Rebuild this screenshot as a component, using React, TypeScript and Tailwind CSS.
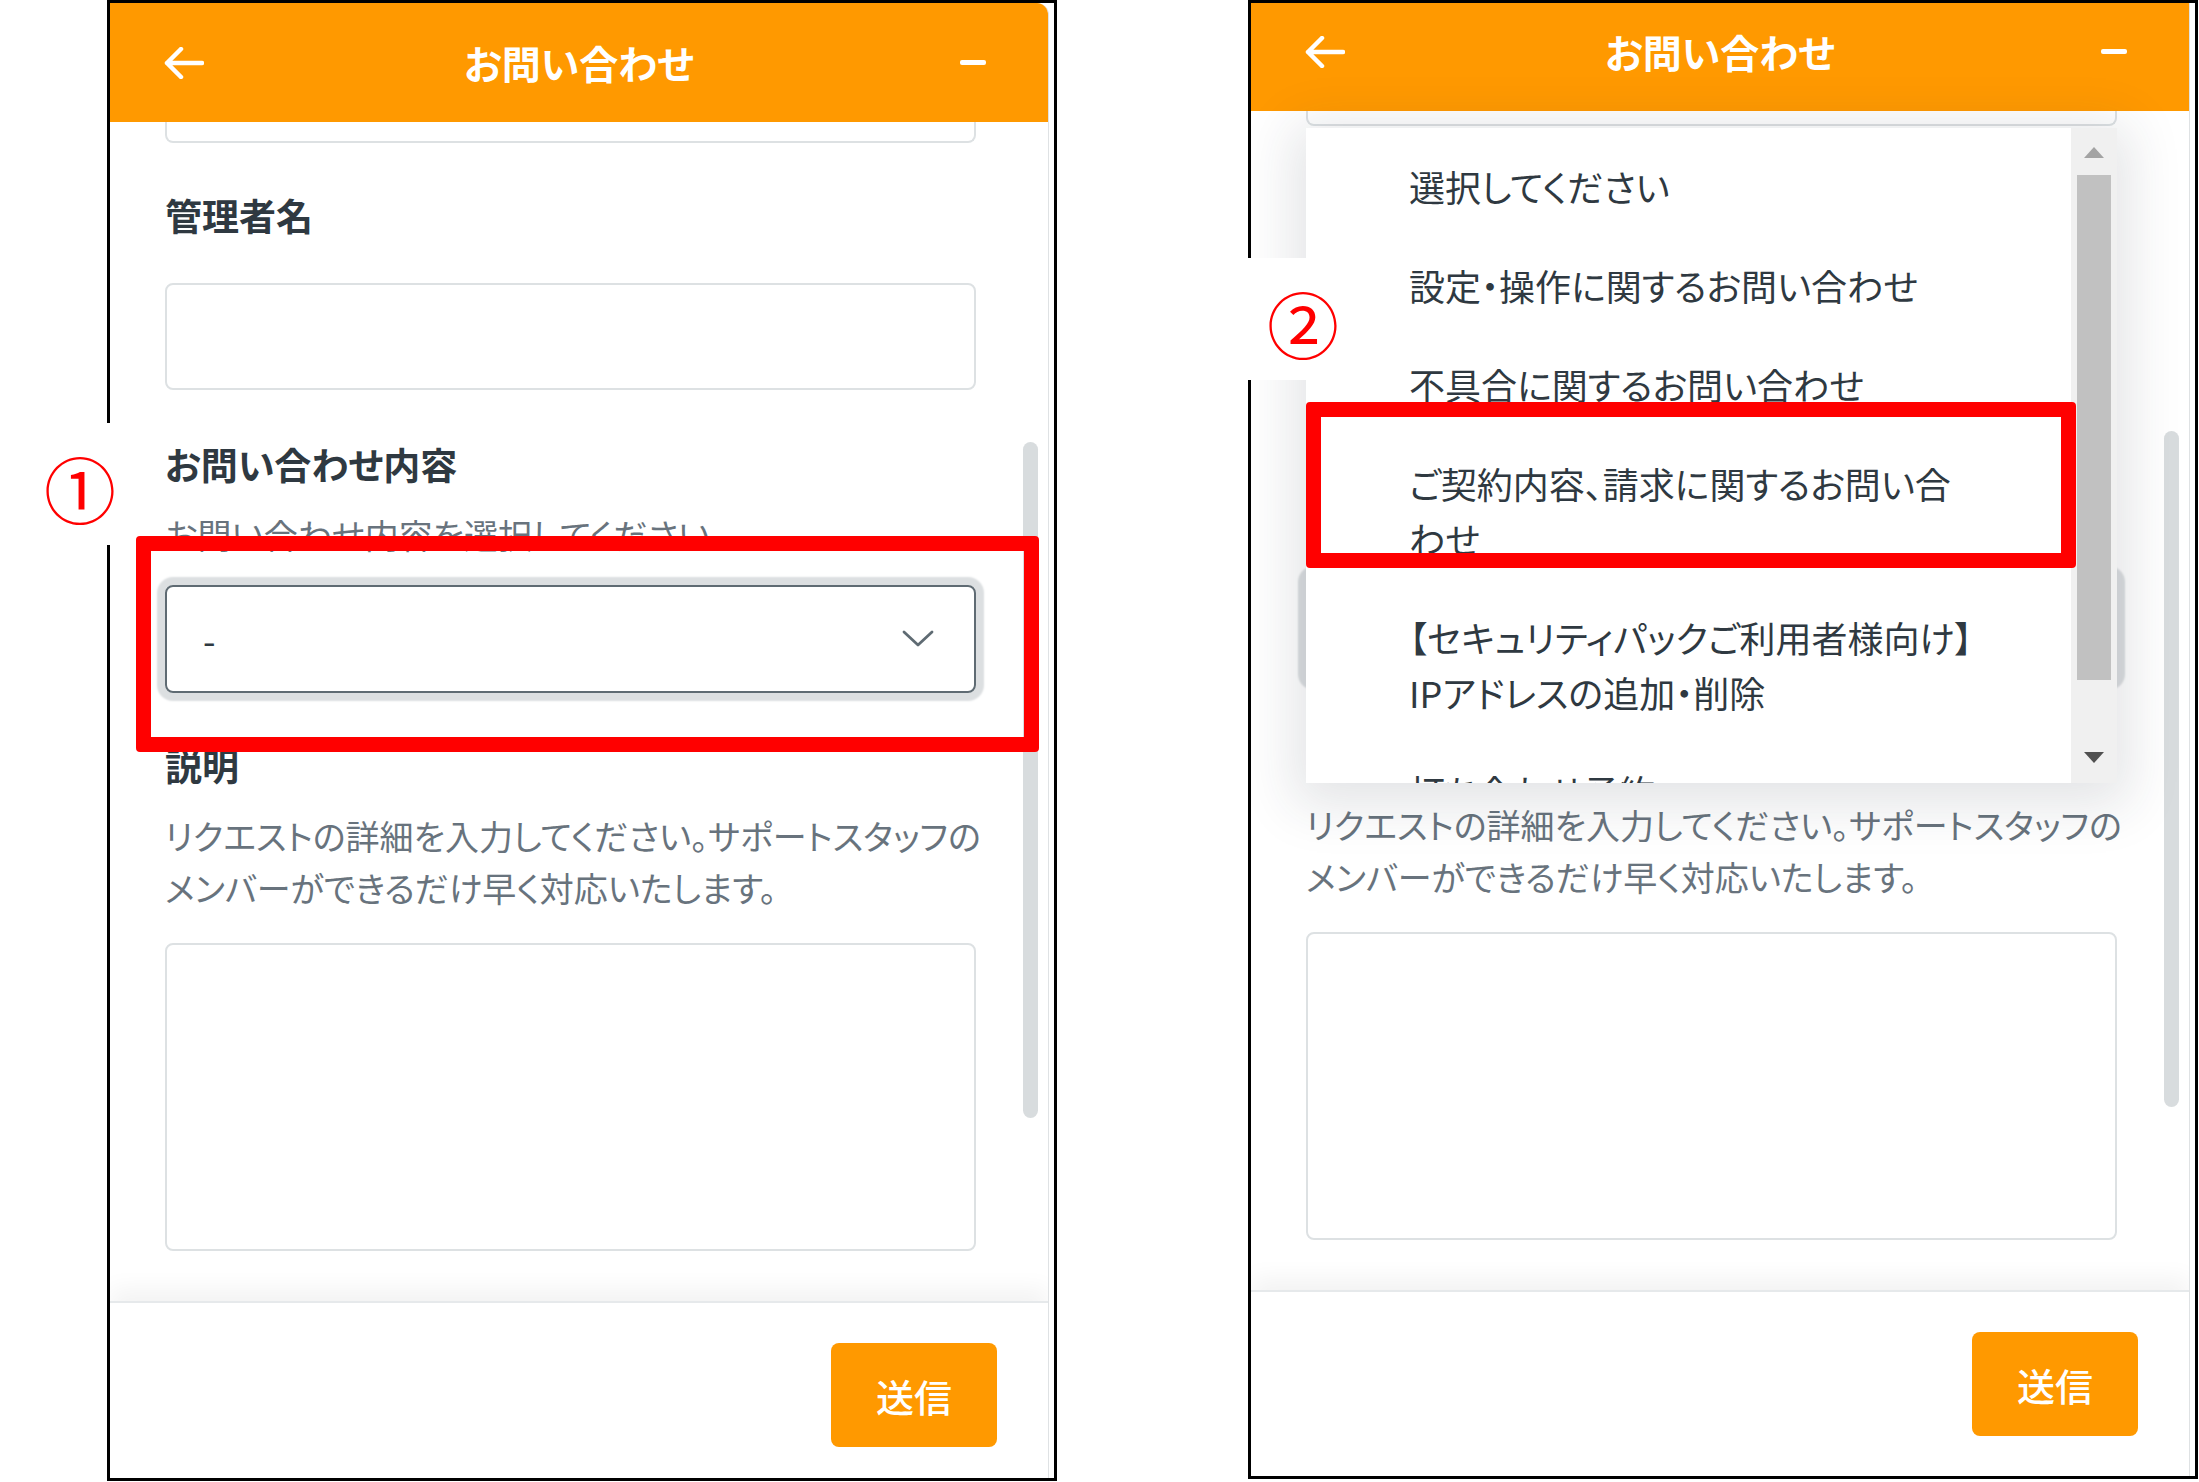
import React from "react";

function BackArrow() {
  return (
    <svg width="40" height="32" viewBox="0 0 40 32" fill="none" stroke="white" strokeWidth="4.5" strokeLinecap="round" strokeLinejoin="round">
      <path d="M38 16H3M17 2L3 16L17 30" />
    </svg>
  );
}

function Chevron() {
  return (
    <svg width="32" height="18" viewBox="0 0 32 18" fill="none" stroke="#5f6b73" strokeWidth="2.8" strokeLinecap="round" strokeLinejoin="round">
      <path d="M2 2L16 15L30 2" />
    </svg>
  );
}

function Dropdown() {
  const options: React.ReactNode[] = [
    "選択してください",
    "設定・操作に関するお問い合わせ",
    "不具合に関するお問い合わせ",
    <>ご契約内容、請求に関するお問い合<br />わせ</>,
    <>【セキュリティパックご利用者様向け】<br />IPアドレスの追加・削除</>,
    "打ち合わせ予約",
  ];
  return (
    <div className="absolute left-[55px] top-[136px] w-[811px] h-[655px] bg-white shadow-[0_10px_50px_12px_rgba(40,50,60,0.13)] overflow-hidden z-20 flex">
      <div className="flex-1 pt-[9px] pl-[103px] text-[36px] leading-[55px] text-[#2f3941]">
        {options.map((o, i) => (
          <div key={i} className="py-[22px] whitespace-nowrap">{o}</div>
        ))}
      </div>
      <div className="w-[46px] bg-[#f0f0f0] flex flex-col items-center">
        <div className="mt-[19px] w-0 h-0 border-l-[10px] border-r-[10px] border-b-[11px] border-l-transparent border-r-transparent border-b-[#a3a3a3]" />
        <div className="mt-[17px] w-[34px] h-[505px] bg-[#c1c1c1]" />
        <div className="mt-[72px] w-0 h-0 border-l-[10px] border-r-[10px] border-t-[11px] border-l-transparent border-r-transparent border-t-[#505050]" />
      </div>
    </div>
  );
}

function Panel({ open }: { open: boolean }) {
  return (
    <div className={`relative w-[950px] ${open ? "h-[1479px]" : "h-[1481px]"} border-[3px] border-black bg-white overflow-hidden`}>
      <div className={`relative w-[939px] ${open ? "h-[1484px] -mt-[11px]" : "h-[1475px]"} flex flex-col rounded-tr-[12px] overflow-hidden border-r border-[#dfe2e4] bg-white`}>
        {/* header */}
        <div className="h-[119px] shrink-0 bg-[#ff9900] grid grid-cols-[1fr_auto_1fr] items-center px-[58px]">
          <div className="justify-self-start -ml-[4px] flex items-center"><BackArrow /></div>
          <div className="text-[39px] font-bold text-white leading-none">お問い合わせ</div>
          <div className="justify-self-end mr-[4px] w-[26px] h-[5px] bg-white rounded-[2px]" />
        </div>
        {/* scroll area */}
        <div className="relative h-[1179px] shrink-0 overflow-hidden pl-[55px] pr-[72px] flex flex-col">
          <div className={`${open ? "h-[15px]" : "h-[21px]"} shrink-0 border-2 border-t-0 border-[#dde1e3] rounded-b-[8px]`} />
          <div className={`${open ? "mt-[54px]" : "mt-[48px]"} text-[37px] leading-[48px] font-bold text-[#2f3941]`}>管理者名</div>
          <div className="mt-[44px] h-[107px] shrink-0 border-2 border-[#dde1e3] rounded-[8px]" />
          <div className="mt-[50px] text-[37px] leading-[48px] font-bold text-[#2f3941]">お問い合わせ内容</div>
          <div className="mt-[23px] text-[34px] leading-[48px] text-[#68737d] whitespace-nowrap">お問い合わせ内容を選択してください</div>
          <div className="mt-[26px] h-[108px] shrink-0 border-2 border-[#5f6b73] rounded-[8px] shadow-[0_0_2px_8px_#dcdfe1] flex items-center justify-between pl-[36px] pr-[40px]">
            <span className="text-[36px] text-[#2f3941] leading-none">-</span>
            <Chevron />
          </div>
          <div className="mt-[48px] text-[37px] leading-[48px] font-bold text-[#2f3941]">説明</div>
          <div className="mt-[21px] text-[34px] leading-[52px] text-[#68737d] whitespace-nowrap">
            リクエストの詳細を入力してください。サポートスタッフの<br />メンバーができるだけ早く対応いたします。
          </div>
          <div className="mt-[29px] h-[308px] shrink-0 border-2 border-[#dde1e3] rounded-[8px]" />
        </div>
        {/* footer */}
        <div className="relative z-10 flex-1 border-t-2 border-[#e6e9eb] bg-white shadow-[0_-12px_22px_rgba(0,0,0,0.05)] flex justify-end items-start pt-[40px] pr-[51px]">
          <div className="w-[166px] h-[104px] rounded-[8px] bg-[#ff9900] text-white text-[38px] font-medium flex items-center justify-center">送信</div>
        </div>
        {/* page scrollbar */}
        <div className="absolute top-[439px] right-[10px] w-[15px] h-[676px] rounded-full bg-[#d8dcde]" />
        {open && <Dropdown />}
      </div>
    </div>
  );
}

export default function App() {
  return (
    <div className="relative w-[2199px] h-[1482px] bg-white overflow-hidden flex items-start gap-[191px] pl-[107px] font-['Noto_Sans_CJK_JP','Noto_Sans',sans-serif] [font-feature-settings:'palt']">
      <Panel open={false} />
      <Panel open={true} />

      {/* annotations */}
      <div className="absolute left-[136px] top-[536px] w-[903px] h-[216px] border-[15px] border-[#ff0000] rounded-[4px] z-30" />
      <div className="absolute left-[1306px] top-[402px] w-[770px] h-[166px] border-[15px] border-[#ff0000] rounded-[4px] z-30" />

      <div className="absolute left-[30px] top-[423px] w-[95px] h-[122px] bg-white z-30 flex items-center justify-center">
        <span className="text-[72px] leading-none text-[#ff0000] ml-[5px] mt-[6px]">①</span>
      </div>
      <div className="absolute left-[1230px] top-[258px] w-[76px] h-[122px] bg-white z-30" />
      <div className="absolute left-[1265px] top-[286px] w-[76px] h-[72px] z-30 flex items-center justify-center">
        <span className="text-[72px] leading-none text-[#ff0000]">②</span>
      </div>
    </div>
  );
}
